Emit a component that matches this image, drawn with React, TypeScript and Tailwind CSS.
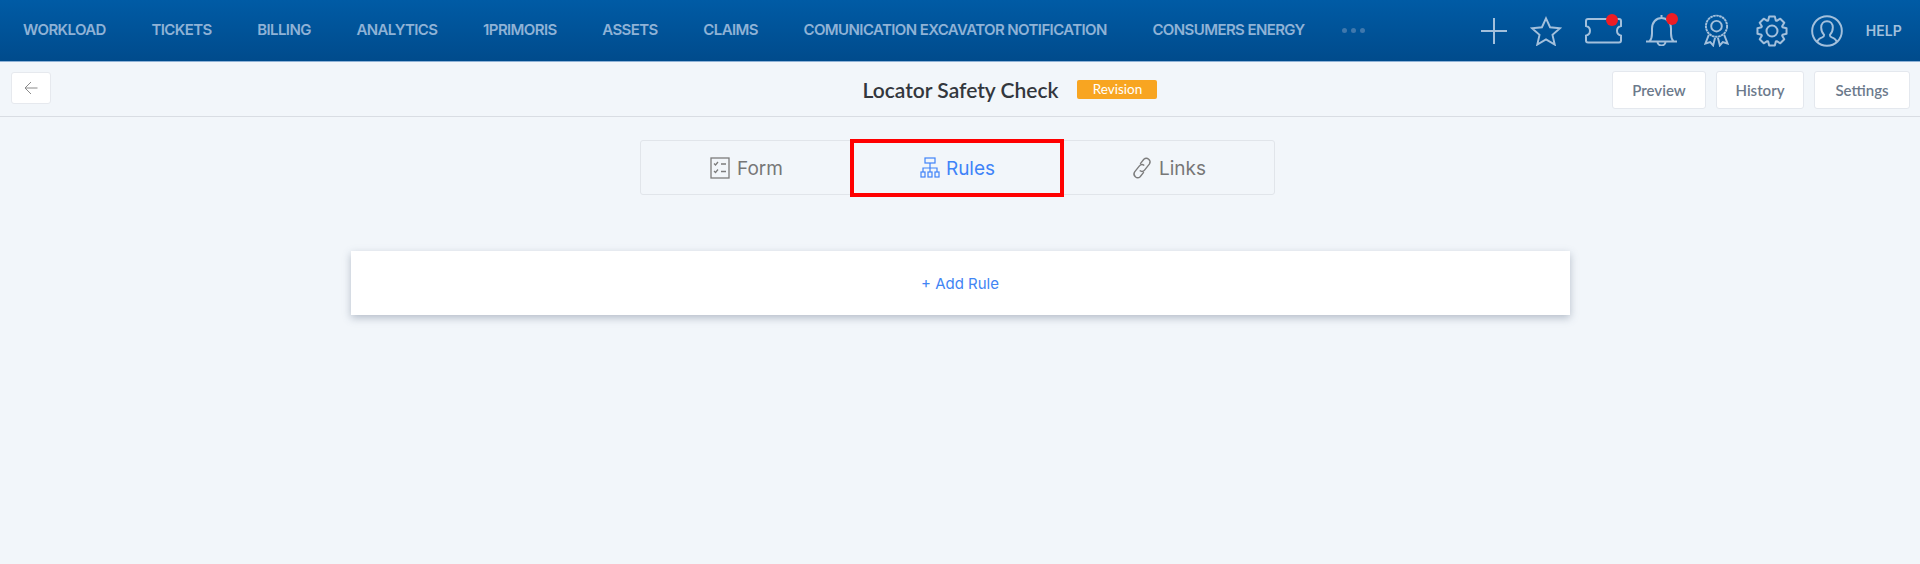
import React from "react";

const NAV = ["WORKLOAD","TICKETS","BILLING","ANALYTICS","1PRIMORIS","ASSETS","CLAIMS","COMUNICATION EXCAVATOR NOTIFICATION","CONSUMERS ENERGY"];

function gearPath() {
  const pts: string[] = [];
  const at = (r: number, deg: number) => {
    const a = (deg * Math.PI) / 180;
    return `${(16 + r * Math.cos(a)).toFixed(2)} ${(16 + r * Math.sin(a)).toFixed(2)}`;
  };
  for (let i = 0; i < 8; i++) {
    const c = i * 45 - 90;
    pts.push(at(11.2, c - 20), at(14.8, c - 11), at(14.8, c + 11), at(11.2, c + 20));
  }
  return "M" + pts.join("L") + "Z";
}

function TopIcons() {
  const cls = "fill-none stroke-[#a3c0dc] stroke-[2]";
  return (
    <div className="flex items-center ml-auto pr-[18px] h-full">
      <svg width="26" height="26" viewBox="0 0 26 26" className={cls + " mr-[23px]"}><path d="M13 0v26M0 13h26" /></svg>
      <svg width="32" height="30" viewBox="0 0 33 31" className={cls + " mr-[23px]"}><path d="M16.500 2.500l4.200 9.100 10.300 1-7.800 6.900 2.300 10-9-5.300-9 5.300 2.300-10-7.800-6.900 10.300-1z" /></svg>
      <div className="relative w-[37px] h-[26px] mr-[23px]">
        <svg width="37" height="26" viewBox="0 0 37 26" className={cls}><path d="M3 1h31a2 2 0 0 1 2 2v5c-2.500.6-4 2.300-4 4.800s1.500 4.200 4 4.800v5a2 2 0 0 1-2 2H3a2 2 0 0 1-2-2v-5c2.500-.6 4-2.300 4-4.800S3.500 8.600 1 8V3a2 2 0 0 1 2-2z" /></svg>
        <span className="absolute w-[12px] h-[12px] rounded-full bg-[#ed1c24] left-[21px] top-[-4px]" />
      </div>
      <div className="relative w-[33px] h-[31px] mr-[26px]">
        <svg width="33" height="31" viewBox="0 0 33 31" className={cls}><path d="M1 26.500h31M4.500 26.500c1.800-2 2.500-4 2.500-8v-5C7 7.500 11 3 16.500 3S26 7.500 26 13.500v5c0 4 .7 6 2.500 8M16.500 0v3M12.500 26.500a4 4 0 0 0 8 0" /></svg>
        <span className="absolute w-[12px] h-[12px] rounded-full bg-[#ed1c24] left-[21px] top-[-2px]" />
      </div>
      <svg width="25" height="33" viewBox="0 0 26 33" className={cls + " mr-[27px]"}><circle cx="13" cy="12" r="11" strokeDasharray="2.700 .5" /><circle cx="13" cy="12" r="5.500" /><path d="M5 21l-3.500 9 5-1.500L9.500 32l2-8M21 21l3.500 9-5-1.500-3 3.500-2-8" /></svg>
      <svg width="32" height="32" viewBox="0 0 32 32" className={cls + " mr-[23px]"}><circle cx="16" cy="16" r="5.500" /><path d={gearPath()} strokeLinejoin="round" /></svg>
      <svg width="32" height="32" viewBox="0 0 33 33" className={cls + " mr-[23px]"}><circle cx="16.500" cy="16.500" r="15.300" /><path d="M6.500 28c.5-3 2-4 5-5 1.500-.6 2-1.300 2-2.500-1.500-1.500-3-4-3-7.500 0-4 2.500-6.500 6-6.500s6 2.500 6 6.500c0 3.500-1.500 6-3 7.500 0 1.200.5 1.900 2 2.500 3 1 4.500 2 5 5" /></svg>
      <span className="text-[14px] font-semibold text-[#a3c0dc] tracking-[0.1px] font-['Inter',sans-serif]">HELP</span>
    </div>
  );
}

function FormIcon() {
  return (
    <svg width="20" height="22" viewBox="0 0 20 22" fill="none" stroke="#7c7c7c" strokeWidth="1.300">
      <rect x="1" y="1" width="18" height="20" />
      <path d="M4 6.500l1.500 1.500L8 5M11 7h5M4 14l1.500 1.500L8 12.500M11 14.500h5" />
    </svg>
  );
}
function RulesIcon() {
  return (
    <svg width="20" height="22" viewBox="0 0 20 22" fill="none" stroke="#3f83f8" strokeWidth="1.200">
      <rect x="5" y="1" width="10" height="5" />
      <path d="M10 6v5M3 15v-4h14v4M10 11v4" />
      <rect x="1" y="15" width="4" height="5" />
      <rect x="8" y="15" width="4" height="5" />
      <rect x="15" y="15" width="4" height="5" />
    </svg>
  );
}
function LinkIcon() {
  return (
    <svg width="22" height="24" viewBox="0 0 24 26" fill="none" stroke="#7c7c7c" strokeWidth="1.500">
      <path d="M10 8.500l4-5a4 4 0 0 1 6 5.200l-5 6.300a4 4 0 0 1-5.500.8" />
      <path d="M14 17.500l-4 5a4 4 0 0 1-6-5.200l5-6.300a4 4 0 0 1 5.500-.8" />
    </svg>
  );
}

function OutlineBtn({ children, w }: { children: React.ReactNode; w: string }) {
  return (
    <button className={"h-[38px] bg-white border border-[#e4e8ee] rounded-[3px] text-[15px] font-semibold text-[#6c7a8c] " + w}>
      {children}
    </button>
  );
}

export default function App() {
  return (
    <div className="h-[564px] bg-[#f2f6fa] font-['Lato','Liberation_Sans',sans-serif] overflow-hidden">
      <header className="h-[62px] flex items-center pl-[23px] bg-gradient-to-b from-[#005ba5] to-[#004b8c] border-b border-[#8fb2d6]">
        <nav className="flex items-center gap-[45.6px] font-['Inter',sans-serif] tracking-[-0.6px]">
          {NAV.map((n) => (
            <span key={n} className="text-[15px] font-semibold text-[#8fb2d6] whitespace-nowrap">{n}</span>
          ))}
          <span className="flex gap-[4px] -ml-[8px]">
            <i className="w-[5px] h-[5px] rounded-full bg-[#3f78ad]" />
            <i className="w-[5px] h-[5px] rounded-full bg-[#3f78ad]" />
            <i className="w-[5px] h-[5px] rounded-full bg-[#3f78ad]" />
          </span>
        </nav>
        <TopIcons />
      </header>

      <div className="h-[55px] grid grid-cols-[1fr_auto_1fr] items-center pl-[11px] pr-[10px] border-b border-[#d9dde3]">
        <div>
          <button className="w-[40px] h-[32px] -mt-[3px] bg-white border border-[#e6e9ee] rounded-[3px] flex items-center justify-center">
            <svg width="14" height="14" viewBox="0 0 14 14" fill="none" stroke="#8a8a8a" strokeWidth="1"><path d="M13.500 7H1M7 1L1 7l6 6" /></svg>
          </button>
        </div>
        <h1 className="text-[21px] font-semibold text-[#33373d] leading-none">Locator Safety Check</h1>
        <div className="flex items-center">
          <span className="ml-[19px] w-[80px] h-[19px] bg-[#f8a521] rounded-[2px] text-white text-[13.5px] flex items-center justify-center">Revision</span>
          <div className="ml-auto flex gap-[10px] mt-[2px]">
            <OutlineBtn w="w-[94px]">Preview</OutlineBtn>
            <OutlineBtn w="w-[88px]">History</OutlineBtn>
            <OutlineBtn w="w-[96px]">Settings</OutlineBtn>
          </div>
        </div>
      </div>

      <div className="mt-[23px] ml-[640px] w-[635px] h-[55px] grid grid-cols-3 border border-[#e1e5ea] rounded-[3px] text-[19px] text-[#777777] font-['Inter',sans-serif]">
        <div className="flex items-center justify-center gap-[7px]"><FormIcon /><span className="mt-[4px]">Form</span></div>
        <div className="relative flex items-center justify-center gap-[6px] text-[#3f83f8]">
          <RulesIcon /><span className="mt-[4px]">Rules</span>
          <span className="absolute left-[-2px] right-[-1px] top-[-2px] bottom-[-3px] border-[4px] border-[#ff0000]" />
        </div>
        <div className="flex items-center justify-center gap-[6px]"><LinkIcon /><span className="mt-[4px]">Links</span></div>
      </div>

      <div className="mt-[56px] mx-auto w-[1219px] h-[64px] pt-[2px] bg-white shadow-[0_3px_8px_rgba(90,105,130,0.4)] flex items-center justify-center text-[15px] text-[#4285f4] font-['Inter',sans-serif]">
        + Add Rule
      </div>
    </div>
  );
}
